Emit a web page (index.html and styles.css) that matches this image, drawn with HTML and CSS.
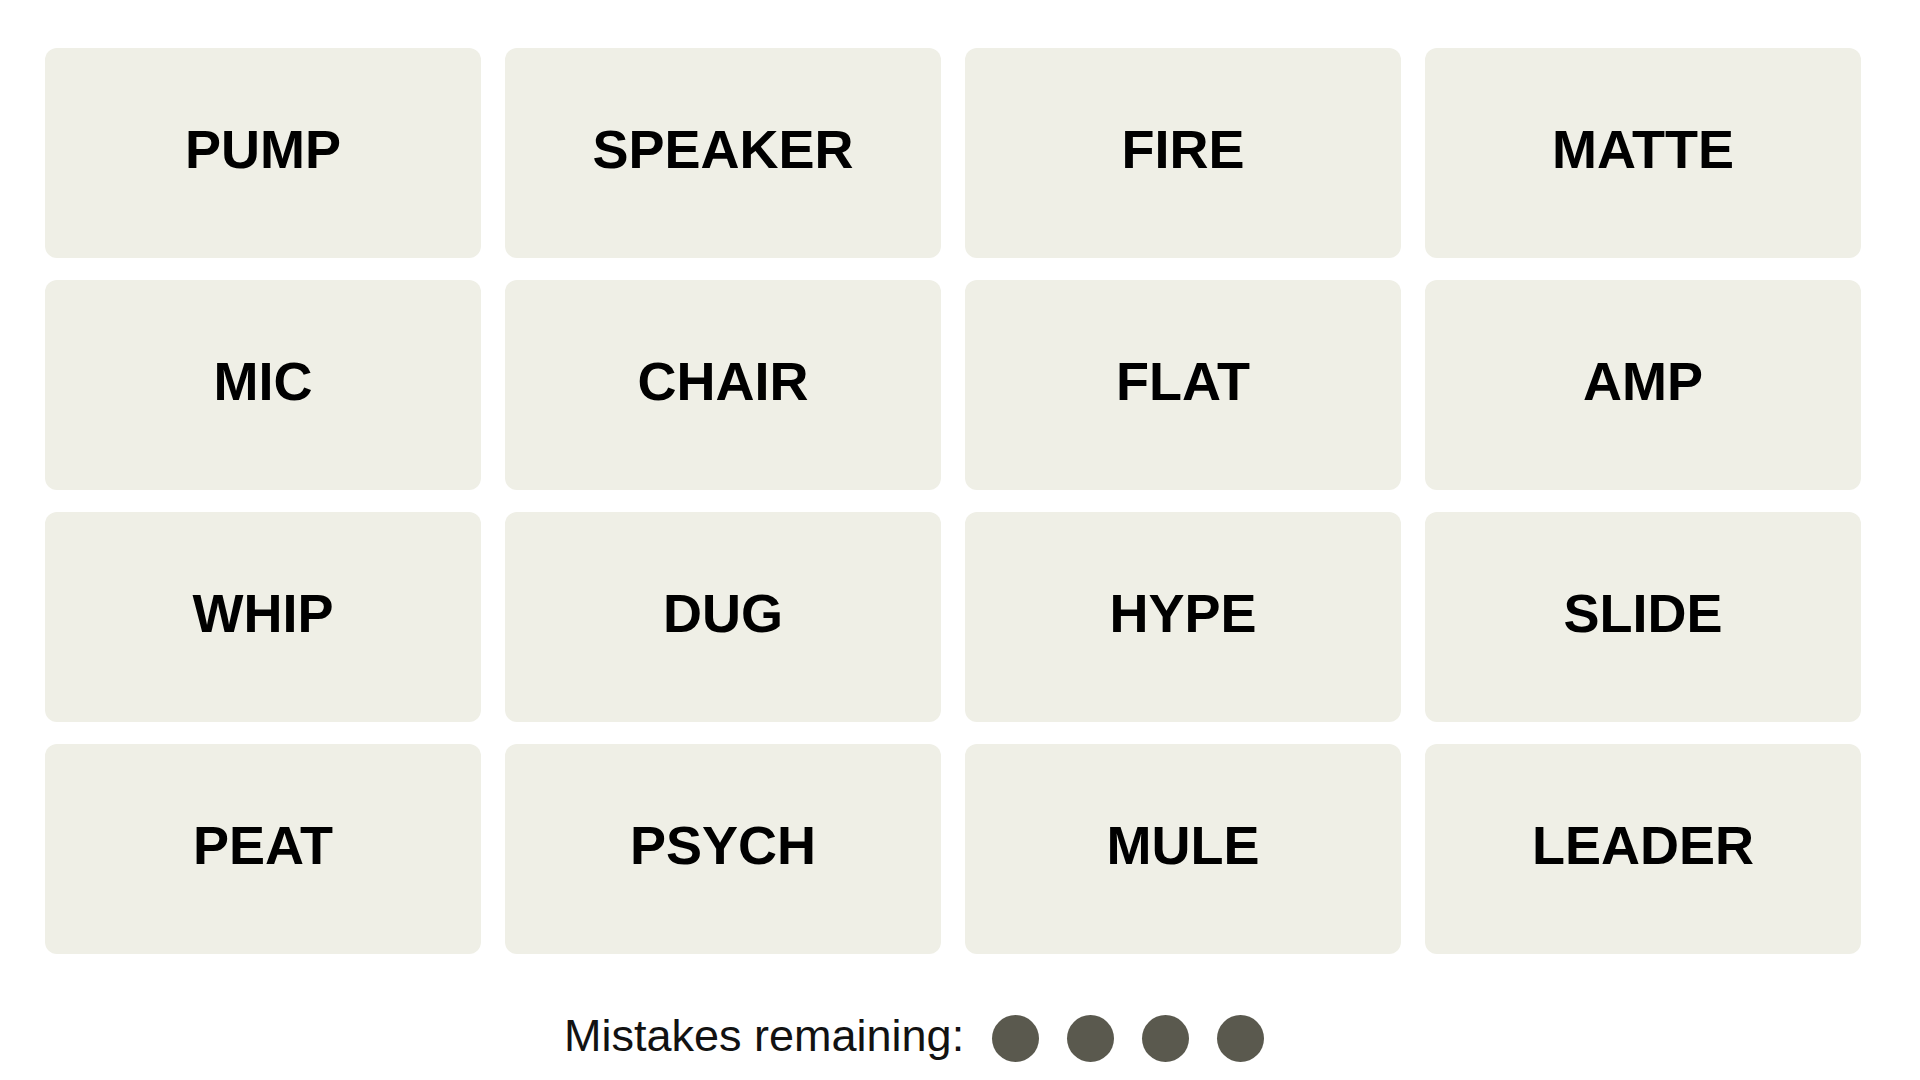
FILE: index.html
```html
<!DOCTYPE html>
<html lang="en">
<head>
<meta charset="utf-8">
<title>Connections</title>
<link rel="stylesheet" href="styles.css">
</head>
<body>
<main class="game">
  <div class="board">
    <div class="tile">PUMP</div>
    <div class="tile">SPEAKER</div>
    <div class="tile">FIRE</div>
    <div class="tile">MATTE</div>
    <div class="tile">MIC</div>
    <div class="tile">CHAIR</div>
    <div class="tile">FLAT</div>
    <div class="tile">AMP</div>
    <div class="tile">WHIP</div>
    <div class="tile">DUG</div>
    <div class="tile">HYPE</div>
    <div class="tile">SLIDE</div>
    <div class="tile">PEAT</div>
    <div class="tile">PSYCH</div>
    <div class="tile">MULE</div>
    <div class="tile">LEADER</div>
  </div>
  <div class="mistakes">
    <span class="mistakes-label">Mistakes remaining:</span>
    <span class="dots">
      <span class="dot"></span>
      <span class="dot"></span>
      <span class="dot"></span>
      <span class="dot"></span>
    </span>
  </div>
</main>
</body>
</html>
```

FILE: styles.css
```css
html, body {
  margin: 0;
  padding: 0;
  background: #ffffff;
}

body {
  width: 1920px;
  height: 1080px;
  overflow: hidden;
  font-family: "Liberation Sans", Arial, sans-serif;
  color: #000;
}

.game {
  display: flex;
  flex-direction: column;
  padding: 48px 0 0 45px;
}

.board {
  display: grid;
  grid-template-columns: repeat(4, 436px);
  grid-auto-rows: 210px;
  column-gap: 24px;
  row-gap: 22px;
  width: 1816px;
}

.tile {
  background: #efefe6;
  border-radius: 12px;
  display: flex;
  align-items: center;
  justify-content: center;
  font-weight: 700;
  font-size: 54px;
  color: #000;
  padding-bottom: 8px;
  box-sizing: border-box;
}

.mistakes {
  display: flex;
  align-items: center;
  margin-top: 57px;
  padding-left: 519px;
  height: 50px;
}

.mistakes-label {
  font-size: 45px;
  font-weight: 400;
  color: #121212;
}

.dots {
  display: flex;
  gap: 28px;
  margin-left: 28px;
  padding-top: 4px;
}

.dot {
  width: 47px;
  height: 47px;
  border-radius: 50%;
  background: #5a594e;
}
```
